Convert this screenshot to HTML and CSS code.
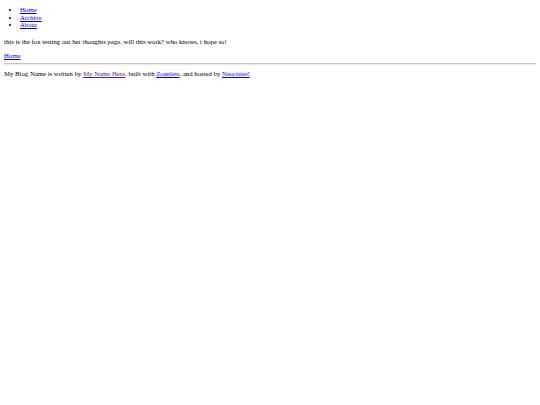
FILE: index.html
```html
<!DOCTYPE html>
<html lang="en">

<head>
    <meta charset="UTF-8" />
    <title>My Blog Name</title>
    <link rel="stylesheet" href="styles.css">
</head>

<body>
    <nav class="nav">
        <ul>
            <li><a href="#">Home</a></li>
            <li><a href="#">Archive</a></li>
            <li><a href="#">About</a></li>
        </ul>
    </nav>

    <main class="main">
        <p>this is the fox testing out her thoughts page. will this work? who knows, i hope so!</p>
        <p class="back"><a href="#">Home</a></p>
    </main>

    <hr>

    <footer class="footer">
        <p>My Blog Name is written by <a href="#" class="visited">My Name Here</a>, built with <a href="#">Zonelets</a>, and hosted by <a href="#">Neocities!</a></p>
    </footer>
</body>

</html>
```

FILE: styles.css
```css
body {
    font-family: "Liberation Serif", serif;
    font-size: 6.75px;
    line-height: 7.5px;
    margin: 0;
    padding: 6px 4px 0;
    color: #000;
}

a {
    color: #0000ee;
    text-decoration: underline;
    text-decoration-thickness: 1px;
    text-underline-offset: 1px;
}

a.visited {
    color: #551a8b;
}

.nav ul {
    margin: 0;
    padding-left: 16px;
}

.main {
    padding-top: 9.5px;
}

.main p {
    margin: 0 0 6.5px;
}

.main .back {
    margin-bottom: 3.5px;
}

hr {
    margin: 0;
    border: none;
    border-top: 1px solid #c4c4c4;
    border-bottom: 1px solid #ececec;
}

.footer p {
    margin: 5px 0 0;
}
```
